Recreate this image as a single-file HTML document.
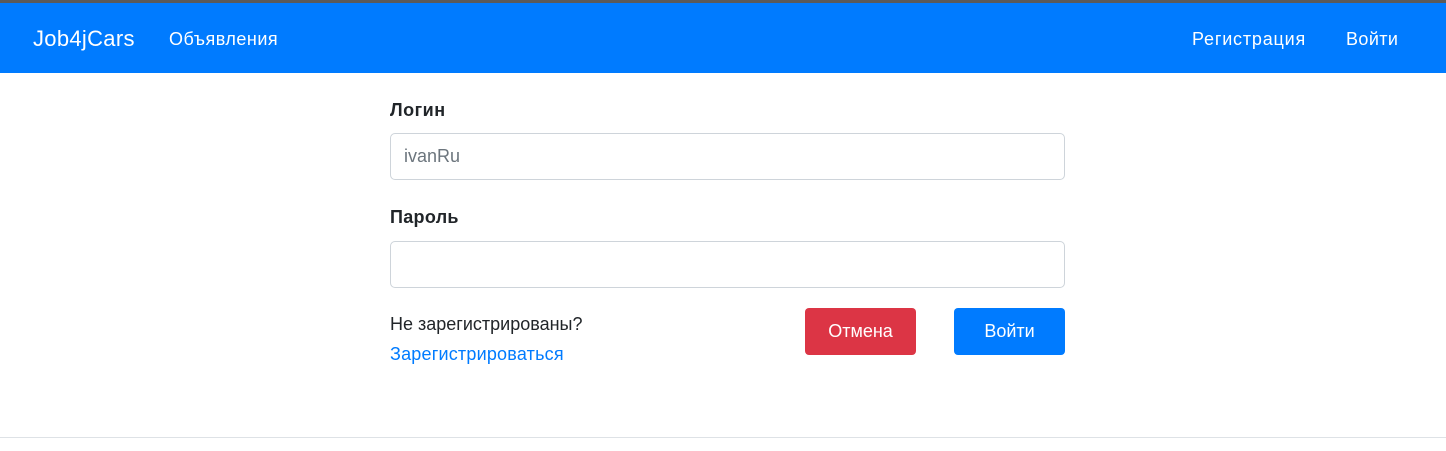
<!DOCTYPE html>
<html><head><meta charset="utf-8"><style>
body{margin:0;width:1446px;height:451px;background:#fff;font-family:"Liberation Sans","Noto Sans CJK SC",sans-serif;position:relative;overflow:hidden;color:#212529}
.a{position:absolute;white-space:nowrap}
.top{position:absolute;left:0;top:0;width:1446px;height:3px;background:#5a5a5a}
.nav{position:absolute;left:0;top:3px;width:1446px;height:70px;background:#007bff}
.w{color:#fff}
.in{position:absolute;left:390px;width:673px;border:1px solid #ced4da;border-radius:5px;height:45px;background:#fff}
.btn{position:absolute;top:308px;height:47px;border-radius:4px;color:#fff;font-size:18px;line-height:47px;text-align:center}
</style></head><body>
<div class="top"></div>
<div class="nav"></div>
<div class="a w" style="left:33px;top:26px;font-size:22px;letter-spacing:0.3px">Job4jCars</div>
<div class="a w" style="left:169px;top:29px;font-size:18px;letter-spacing:0.5px">Объявления</div>
<div class="a w" style="left:1192px;top:29px;font-size:18px;letter-spacing:0.8px">Регистрация</div>
<div class="a w" style="left:1346px;top:29px;font-size:18px;letter-spacing:0.4px">Войти</div>
<div class="a" style="left:390px;top:100px;font-size:18px;font-weight:bold;letter-spacing:0.5px">Логин</div>
<div class="in" style="top:133px"></div>
<div class="a" style="left:404px;top:146px;font-size:18px;color:#6c757d">ivanRu</div>
<div class="a" style="left:390px;top:207px;font-size:18px;font-weight:bold;letter-spacing:0.3px">Пароль</div>
<div class="in" style="top:241px"></div>
<div class="a" style="left:390px;top:314px;font-size:18px">Не зарегистрированы?</div>
<div class="a" style="left:390px;top:344px;font-size:18px;color:#007bff;letter-spacing:0.2px">Зарегистрироваться</div>
<div class="btn" style="left:805px;width:111px;background:#dc3545">Отмена</div>
<div class="btn" style="left:954px;width:111px;background:#007bff">Войти</div>
<div style="position:absolute;left:0;top:437px;width:1446px;height:1px;background:#dee2e6"></div>
</body></html>
